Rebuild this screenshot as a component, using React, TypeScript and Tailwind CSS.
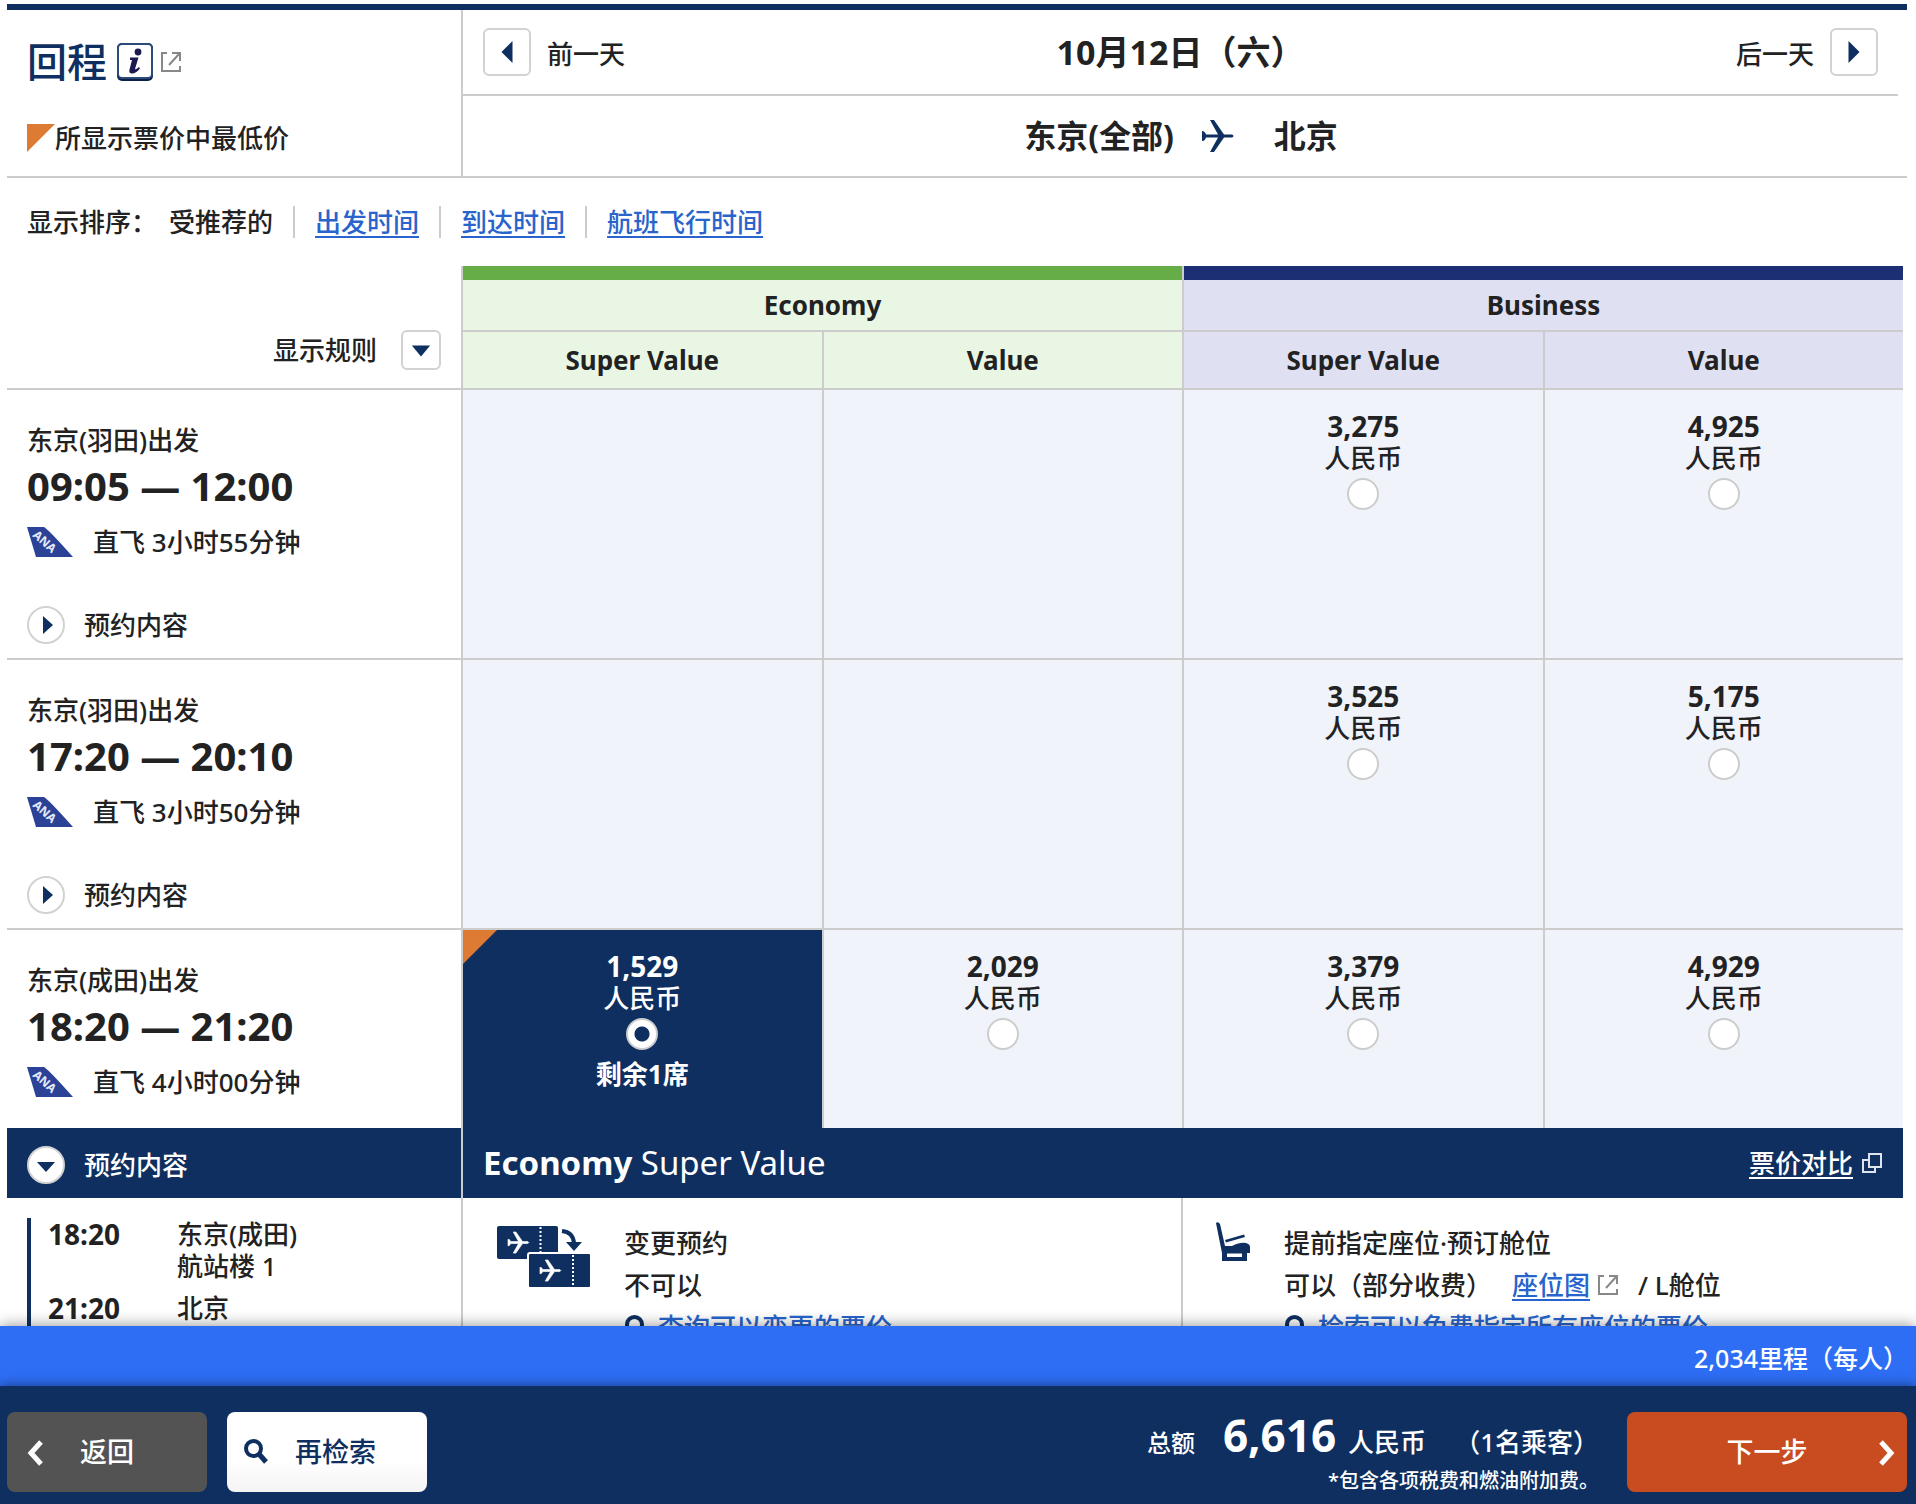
import type { ReactNode } from "react";
import clsx from "clsx";

type Fare = { price: string; seats?: string; lowest?: boolean } | null;

type Flight = {
  id: string;
  from: string;
  time: string;
  duration: string;
  fares: Fare[];
};

const flights: Flight[] = [
  {
    id: "f1",
    from: "东京(羽田)出发",
    time: "09:05 — 12:00",
    duration: "直飞 3小时55分钟",
    fares: [null, null, { price: "3,275" }, { price: "4,925" }],
  },
  {
    id: "f2",
    from: "东京(羽田)出发",
    time: "17:20 — 20:10",
    duration: "直飞 3小时50分钟",
    fares: [null, null, { price: "3,525" }, { price: "5,175" }],
  },
  {
    id: "f3",
    from: "东京(成田)出发",
    time: "18:20 — 21:20",
    duration: "直飞 4小时00分钟",
    fares: [
      { price: "1,529", seats: "剩余1席", lowest: true },
      { price: "2,029" },
      { price: "3,379" },
      { price: "4,929" },
    ],
  },
];

const fareNames = ["Economy Super Value", "Economy Value", "Business Super Value", "Business Value"];
const sortLinks = ["出发时间", "到达时间", "航班飞行时间"];

export default function App() {
  return (
    <div className="flex h-screen flex-col overflow-hidden bg-white font-['Noto_Sans','Noto_Sans_CJK_SC',sans-serif] text-[26px] leading-8 font-medium text-[#222]">
      <main className="min-h-0 flex-1 overflow-hidden pt-1 pr-[9px] pl-[7px]">
        <Header />
        <SortBar />
        <FareTable />
      </main>
      <Footer />
    </div>
  );
}

function Header() {
  return (
    <header className="grid grid-cols-[454px_1fr] border-t-6 border-b-2 border-t-[#0e2f5f] border-b-[#ccc]">
      <div className="flex h-[166px] flex-col justify-between pt-6 pb-[22px] pl-5">
        <h1 className="flex items-center text-[40px] leading-[56px] text-[#0e2f5f]">
          回程
          <a href="#info" aria-label="说明" className="ml-[10px] flex items-center gap-2">
            <InfoIcon />
            <ExternalIcon />
          </a>
        </h1>
        <p className="flex items-center">
          <svg viewBox="0 0 28 28" className="size-7">
            <path d="M0 0H28L0 28Z" fill="#dd7a33" />
          </svg>
          所显示票价中最低价
        </p>
      </div>
      <div className="flex flex-col border-l-2 border-[#ccc]">
        <div className="mr-[9px] flex h-[86px] items-center justify-between border-b-2 border-[#ccc] pr-5 pl-5">
          <div className="flex items-center gap-4">
            <SquareButton label="前一天" size="lg">
              <path d="M14 0V24L2 12Z" />
            </SquareButton>
            <span className="pt-1">前一天</span>
          </div>
          <h2 className="text-[34px] font-bold">10月12日（六）</h2>
          <div className="flex items-center gap-4">
            <span className="pt-1">后一天</span>
            <SquareButton label="后一天" size="lg">
              <path d="M2 0V24L14 12Z" />
            </SquareButton>
          </div>
        </div>
        <div className="flex flex-1 items-center justify-center pr-2 text-[32px] font-bold">
          <span>东京(全部)</span>
          <svg viewBox="0 0 32 32" className="mr-10 ml-7 size-8" fill="#0e2f5f">
            <PlaneShape />
          </svg>
          <span>北京</span>
        </div>
      </div>
    </header>
  );
}

function SortBar() {
  return (
    <div className="flex h-[88px] items-center pl-5">
      <span>显示排序：</span>
      <span className="mr-5 ml-3">受推荐的</span>
      {sortLinks.map((name) => (
        <span key={name} className="border-l-2 border-[#ccc] px-5">
          <TextLink>{name}</TextLink>
        </span>
      ))}
    </div>
  );
}

function FareTable() {
  return (
    <table className="mr-1 w-[calc(100%-4px)] table-fixed border-separate border-spacing-0">
      <colgroup>
        <col className="w-[454px]" />
        <col />
        <col />
        <col />
        <col />
      </colgroup>
      <thead>
        <tr>
          <td rowSpan={2} className="border-b-2 border-[#ccc] pr-5 pb-[18px] align-bottom">
            <div className="flex items-center justify-end gap-6">
              显示规则
              <SquareButton label="显示规则" size="sm">
                <path d="M-2 7H18L8 19Z" />
              </SquareButton>
            </div>
          </td>
          <th colSpan={2} className="border-b-2 border-l-2 border-[#ccc] bg-[#e9f6e4] p-0 font-bold">
            <div className="h-[14px] bg-[#66ad47]" />
            <div className="leading-[50px]">Economy</div>
          </th>
          <th colSpan={2} className="border-b-2 border-l-2 border-[#ccc] bg-[#dfe1f3] p-0 font-bold">
            <div className="h-[14px] bg-[#1c2e74]" />
            <div className="leading-[50px]">Business</div>
          </th>
        </tr>
        <tr>
          {fareNames.map((name, i) => (
            <th
              key={name}
              className={clsx(
                "border-b-2 border-l-2 border-[#ccc] p-0 leading-[56px] font-bold",
                i < 2 ? "bg-[#e9f6e4]" : "bg-[#dfe1f3]",
              )}
            >
              {name.replace(/^(Economy|Business) /, "")}
            </th>
          ))}
        </tr>
      </thead>
      <tbody>
        {flights.map((f, i) => (
          <FlightRow key={f.id} flight={f} open={i === 2} />
        ))}
        <tr className="bg-[#0e2f5f] text-white">
          <td className="h-[70px] pt-1 pl-5">
            <DetailToggle open />
          </td>
          <td colSpan={4} className="border-l-2 border-[#ccc] pr-5 pl-5">
            <div className="flex items-center justify-between">
              <h3 className="text-[33px] leading-10 font-normal">
                <b>Economy</b> Super Value
              </h3>
              <a href="#compare" className="flex items-center gap-2">
                <span className="underline decoration-2 underline-offset-4">票价对比</span>
                <WindowsIcon />
              </a>
            </div>
          </td>
        </tr>
        <tr className="align-top">
          <td className="pt-5 pl-5">
            <dl className="grid grid-cols-[129px_1fr] gap-y-[10px] border-l-4 border-[#0e2f5f] pb-10 pl-[17px]">
              <dt className="text-[28px] font-bold">18:20</dt>
              <dd>
                东京(成田)
                <br />
                航站楼 1
              </dd>
              <dt className="text-[28px] font-bold">21:20</dt>
              <dd>北京</dd>
            </dl>
          </td>
          <td colSpan={4} className="border-l-2 border-[#ccc] p-0">
            <div className="grid grid-cols-[calc(50%-2px)_1fr]">
              <div className="flex pt-6 pl-[34px]">
                <div className="w-[127px] pt-1">
                  <TicketsIcon />
                </div>
                <div className="pb-10 leading-[42px]">
                  <p>变更预约</p>
                  <p>不可以</p>
                  <SearchLink>查询可以变更的票价</SearchLink>
                </div>
              </div>
              <div className="flex border-l-2 border-[#ccc] pt-6 pl-8">
                <div className="w-[69px]">
                  <SeatIcon />
                </div>
                <div className="pb-10 leading-[42px]">
                  <p>提前指定座位·预订舱位</p>
                  <p className="flex items-center">
                    可以（部分收费）
                    <span className="ml-5">
                      <TextLink>座位图</TextLink>
                    </span>
                    <span className="mr-5 ml-2">
                      <ExternalIcon />
                    </span>
                    / L舱位
                  </p>
                  <SearchLink>检索可以免费指定所有座位的票价</SearchLink>
                </div>
              </div>
            </div>
          </td>
        </tr>
      </tbody>
    </table>
  );
}

function FlightRow({ flight, open }: { flight: Flight; open: boolean }) {
  return (
    <tr className="align-top">
      <td className={clsx("pt-[34px] pl-5", open ? "h-[198px]" : "h-[270px] border-b-2 border-[#ccc]")}>
        <p>{flight.from}</p>
        <p className="mt-2 text-[40px] leading-[44px] font-bold">{flight.time}</p>
        <p className="mt-[18px] flex items-center gap-5">
          <AnaLogo />
          {flight.duration}
        </p>
        {!open && (
          <div className="mt-12">
            <DetailToggle />
          </div>
        )}
      </td>
      {flight.fares.map((fare, i) => (
        <td
          key={fareNames[i]}
          className={clsx(
            "relative border-l-2 border-[#ccc] px-0 pt-5 text-center",
            !open && "border-b-2",
            fare?.lowest ? "bg-[#0e2f5f] text-white" : "bg-[#f0f3f9]",
          )}
        >
          {fare && (
            <label className="flex flex-col items-center">
              {fare.lowest && (
                <svg viewBox="0 0 34 34" className="absolute top-0 left-0 size-[34px]">
                  <path d="M0 0H34L0 34Z" fill="#dd7a33" />
                </svg>
              )}
              <span className="text-[28px] font-bold">{fare.price}</span>
              <span>人民币</span>
              <input
                type="radio"
                name="fare"
                defaultChecked={fare.lowest}
                aria-label={`${fareNames[i]} ${fare.price}`}
                className="mt-1 size-8 appearance-none rounded-full border-2 border-[#ccc] bg-white checked:bg-[radial-gradient(circle,#0e2f5f_7px,#fff_8px)]"
              />
              {fare.seats && <span className="mt-2 font-bold">{fare.seats}</span>}
            </label>
          )}
        </td>
      ))}
    </tr>
  );
}

function Footer() {
  return (
    <footer className="relative text-white shadow-[0_0_14px_rgba(0,0,0,0.45)]">
      <p className="flex h-[60px] items-center justify-end bg-[#2e6ef5] pt-1 pr-2 text-[25px]">2,034里程（每人）</p>
      <div className="relative flex h-[118px] items-center bg-[#0e2f5f] pt-[14px] pr-[9px] pb-0 pl-[7px] shadow-[0_0_12px_rgba(0,0,0,0.5)]">
        <button className="relative h-20 w-[200px] rounded-lg bg-[#535353] text-[27px]">
          <svg viewBox="0 0 16 26" className="absolute top-7 left-5 h-[26px] w-4" fill="none" stroke="#fff" strokeWidth="5">
            <path d="M14 2L4 13L14 24" />
          </svg>
          返回
        </button>
        <button className="relative ml-5 h-20 w-[200px] rounded-lg bg-linear-to-b from-white from-60% to-[#f4f4f4] pl-[17px] text-[27px] text-[#0e2f5f]">
          <span className="absolute top-[26px] left-4">
            <SearchIcon />
          </span>
          再检索
        </button>
        <div className="ml-auto pr-7 text-right">
          <p className="flex items-baseline justify-end pt-1 leading-[46px]">
            <span className="text-[24px]">总额</span>
            <b className="mr-3 ml-7 text-[44px]">6,616</b>
            <span className="text-[26px]">人民币</span>
            <span className="ml-7 text-[26px]">（1名乘客）</span>
          </p>
          <p className="text-[20px] leading-[30px]">*包含各项税费和燃油附加费。</p>
        </div>
        <button className="relative h-20 w-[280px] rounded-lg bg-[#c84c20] text-[27px]">
          下一步
          <svg viewBox="0 0 16 26" className="absolute top-7 right-3 h-[26px] w-4" fill="none" stroke="#fff" strokeWidth="5">
            <path d="M2 2L12 13L2 24" />
          </svg>
        </button>
      </div>
    </footer>
  );
}

function TextLink({ children }: { children: ReactNode }) {
  return (
    <a href="#link" className="text-[#2864cc] underline decoration-2 underline-offset-4">
      {children}
    </a>
  );
}

function SearchLink({ children }: { children: ReactNode }) {
  return (
    <p className="flex items-center gap-2">
      <SearchIcon />
      <TextLink>{children}</TextLink>
    </p>
  );
}

function SquareButton({ label, size, children }: { label: string; size: "sm" | "lg"; children: ReactNode }) {
  return (
    <button
      aria-label={label}
      className={clsx(
        "flex items-center justify-center rounded-md border-2 border-[#d2d2d2] bg-white",
        size === "lg" ? "size-12" : "size-10",
      )}
    >
      <svg viewBox="0 0 16 24" className="h-[22px] w-4 overflow-visible" fill="#0e2f5f">
        {children}
      </svg>
    </button>
  );
}

function DetailToggle({ open }: { open?: boolean }) {
  return (
    <button className="flex items-center gap-[19px]">
      <svg viewBox="0 0 38 38" className="size-[38px]">
        <circle cx="19" cy="19" r="18" fill="#fff" stroke="#d2d2d2" strokeWidth="2" />
        <path d={open ? "M10 16H28L19 26Z" : "M16 10V28L26 19Z"} fill="#0e2f5f" />
      </svg>
      预约内容
    </button>
  );
}

function PlaneShape() {
  return (
    <path d="M0 11Q3 11 4 14.500H16L8 0H12L22 14.500H30Q33 16 30 17.500H22L12 32H8L16 17.500H4Q3 21 0 21Z" />
  );
}

function InfoIcon() {
  return (
    <svg viewBox="0 0 36 38" className="h-[38px] w-9">
      <rect x="0" y="0" width="36" height="38" rx="5" fill="#0b1f47" />
      <rect x="1" y="1" width="34" height="34" rx="4" fill="#fff" stroke="#2a4a78" strokeWidth="2" />
      <circle cx="21" cy="9" r="3.4" fill="#1d1a52" />
      <path d="M13 14.500H21.500L18 26Q18.500 27 22 24L23 25.500Q18.500 31 14.500 30.500Q11.500 30 12.500 26.500L15 17H13Z" fill="#1d1a52" />
    </svg>
  );
}

function ExternalIcon() {
  return (
    <svg viewBox="0 0 20 22" className="h-[22px] w-5" fill="none" stroke="#888" strokeWidth="2">
      <path d="M6 2H1V20H19V15M11 2H19V10M18 3L8 14" />
    </svg>
  );
}

function WindowsIcon() {
  return (
    <svg viewBox="0 0 22 22" className="h-[22px] w-[22px]" fill="none" stroke="#dfe4ec" strokeWidth="2">
      <path d="M8 2H20V15H8ZM8 8H2V20H14V15" />
    </svg>
  );
}

function SearchIcon() {
  return (
    <svg viewBox="0 0 26 26" className="size-[26px]" fill="none" stroke="#0e2f5f" strokeWidth="4">
      <circle cx="10.500" cy="10.500" r="7.500" />
      <path d="M16 16L23 24" strokeWidth="5" />
    </svg>
  );
}

function AnaLogo() {
  return (
    <svg viewBox="0 0 46 30" className="h-[30px] w-[46px] overflow-visible">
      <path d="M0 0H17Q21 2 46 30H9Z" fill="#2b4297" />
      <text x="5" y="9" transform="rotate(42 5 9)" fill="#e4e9f7" fontSize="12" fontWeight="700">
        ANA
      </text>
    </svg>
  );
}

function TicketsIcon() {
  return (
    <svg viewBox="0 0 94 62" className="h-[62px] w-[94px]">
      <rect x="0" y="0" width="61" height="33" rx="2" fill="#0e2f5f" />
      <path d="M43.500 1V32" stroke="#fff" strokeWidth="2" strokeDasharray="2 2" />
      <g transform="translate(11 6) scale(0.660)" fill="#fff" stroke="#fff">
        <PlaneShape />
      </g>
      <rect x="31" y="27" width="63" height="35" rx="2" fill="#0e2f5f" stroke="#fff" strokeWidth="2" />
      <path d="M76 29V61" stroke="#fff" strokeWidth="2" strokeDasharray="2 2" />
      <g transform="translate(43 34) scale(0.660)" fill="#fff" stroke="#fff">
        <PlaneShape />
      </g>
      <path d="M65 5Q76 6 77 17" fill="none" stroke="#0e2f5f" strokeWidth="4" />
      <path d="M69 16H85L77 25Z" fill="#0e2f5f" />
    </svg>
  );
}

function SeatIcon() {
  return (
    <svg viewBox="0 0 36 40" className="h-10 w-9" fill="#0e2f5f">
      <path d="M1 1Q3 -1 5 2L10 24H17Q25 20 31 21Q35 22 35 25V31H32V39H7V31Z" />
      <path d="M10 18L29 12.500L30 15L11 20.500Z" />
      <path d="M12 31.500H27V35H12Z" fill="#fff" />
    </svg>
  );
}
